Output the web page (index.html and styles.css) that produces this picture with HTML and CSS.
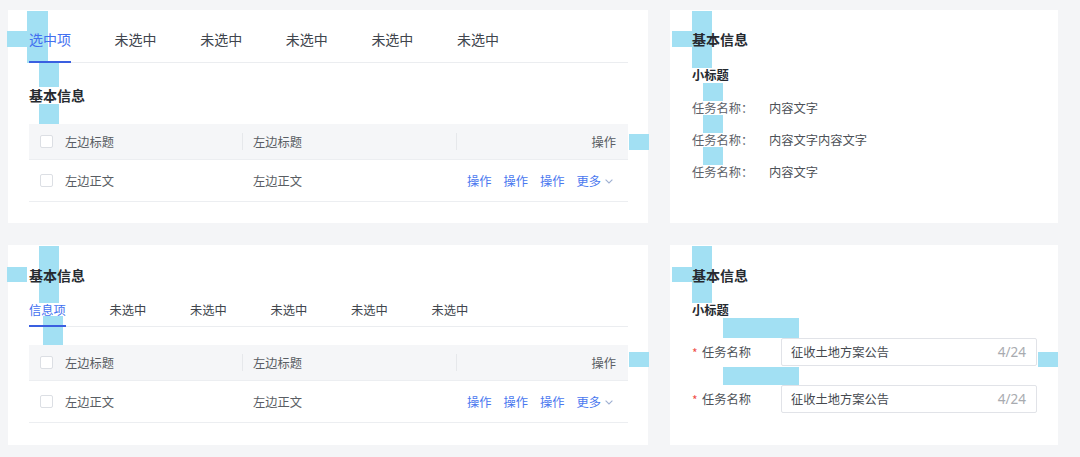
FILE: index.html
```html
<!DOCTYPE html>
<html lang="zh-CN">
<head>
<meta charset="utf-8">
<title>组件示例</title>
<link rel="stylesheet" href="styles.css">
</head>
<body>
<div class="page">

  <section class="card card-a">
    <span class="mark a-v1"></span>
    <span class="mark a-h1"></span>
    <span class="mark a-v2"></span>
    <span class="mark a-v3"></span>
    <span class="mark a-h2"></span>
    <nav class="tabs tabs-lg">
      <span class="tab active">选中项</span>
      <span class="tab">未选中</span>
      <span class="tab">未选中</span>
      <span class="tab">未选中</span>
      <span class="tab">未选中</span>
      <span class="tab">未选中</span>
    </nav>
    <h2 class="title title-after-tabs">基本信息</h2>
    <div class="table">
      <div class="tr thead">
        <div class="td c1"><span class="checkbox"></span>左边标题</div>
        <div class="td c2 divided">左边标题</div>
        <div class="td c3 divided">操作</div>
      </div>
      <div class="tr tbody">
        <div class="td c1"><span class="checkbox"></span>左边正文</div>
        <div class="td c2">左边正文</div>
        <div class="td c3 actions">
          <a class="link">操作</a><a class="link">操作</a><a class="link">操作</a>
          <a class="link more">更多<svg class="chev" width="8" height="5" viewBox="0 0 8 5"><path d="M0.6 0.6 L4 4 L7.4 0.6" fill="none" stroke="#9fb0d2" stroke-width="1.1"/></svg></a>
        </div>
      </div>
    </div>
  </section>

  <section class="card card-b">
    <span class="mark b-v1"></span>
    <span class="mark b-h1"></span>
    <span class="mark b-r1"></span>
    <span class="mark b-r2"></span>
    <span class="mark b-r3"></span>
    <h2 class="title">基本信息</h2>
    <h3 class="subtitle subtitle-b">小标题</h3>
    <dl class="desc">
      <div class="desc-row"><dt>任务名称：</dt><dd>内容文字</dd></div>
      <div class="desc-row"><dt>任务名称：</dt><dd>内容文字内容文字</dd></div>
      <div class="desc-row"><dt>任务名称：</dt><dd>内容文字</dd></div>
    </dl>
  </section>

  <section class="card card-c">
    <span class="mark c-v1"></span>
    <span class="mark c-h1"></span>
    <span class="mark c-v2"></span>
    <span class="mark c-h2"></span>
    <h2 class="title">基本信息</h2>
    <nav class="tabs tabs-sm">
      <span class="tab active">信息项</span>
      <span class="tab">未选中</span>
      <span class="tab">未选中</span>
      <span class="tab">未选中</span>
      <span class="tab">未选中</span>
      <span class="tab">未选中</span>
    </nav>
    <div class="table table-after-tabs">
      <div class="tr thead">
        <div class="td c1"><span class="checkbox"></span>左边标题</div>
        <div class="td c2 divided">左边标题</div>
        <div class="td c3 divided">操作</div>
      </div>
      <div class="tr tbody">
        <div class="td c1"><span class="checkbox"></span>左边正文</div>
        <div class="td c2">左边正文</div>
        <div class="td c3 actions">
          <a class="link">操作</a><a class="link">操作</a><a class="link">操作</a>
          <a class="link more">更多<svg class="chev" width="8" height="5" viewBox="0 0 8 5"><path d="M0.6 0.6 L4 4 L7.4 0.6" fill="none" stroke="#9fb0d2" stroke-width="1.1"/></svg></a>
        </div>
      </div>
    </div>
  </section>

  <section class="card card-d">
    <span class="mark d-v1"></span>
    <span class="mark d-h1"></span>
    <span class="mark d-g1"></span>
    <span class="mark d-g2"></span>
    <span class="mark d-r1"></span>
    <h2 class="title">基本信息</h2>
    <h3 class="subtitle subtitle-d">小标题</h3>
    <form class="form">
      <div class="form-row">
        <label class="form-label"><span class="req">*</span>任务名称</label>
        <div class="input"><span class="input-text">征收土地方案公告</span><span class="count">4/24</span></div>
      </div>
      <div class="form-row">
        <label class="form-label"><span class="req">*</span>任务名称</label>
        <div class="input"><span class="input-text">征收土地方案公告</span><span class="count">4/24</span></div>
      </div>
    </form>
  </section>

</div>
</body>
</html>
```

FILE: styles.css
```css
* { box-sizing: border-box; margin: 0; padding: 0; }

html, body {
  width: 1080px;
  height: 457px;
  overflow: hidden;
}

body {
  background: #f4f5f7;
  font-family: "Noto Sans CJK SC", "Noto Sans", "Liberation Sans", sans-serif;
  color: #333;
  font-size: 12.25px;
}

.page {
  display: grid;
  grid-template-columns: 640px 388px;
  grid-template-rows: 213px 200px;
  column-gap: 22px;
  row-gap: 22px;
  padding: 10px 0 0 8px;
}

.card {
  position: relative;
  background: #fff;
}

.card-a { padding: 21px 20px 0 21px; }
.card-b { padding: 21px 20px 0 22px; }
.card-c { padding: 22px 20px 0 21px; }
.card-d { padding: 22px 21px 0 22px; }

/* spacing annotation markers (overlay) */
.mark {
  position: absolute;
  background: #a2e0f3;
  z-index: 0;
}
.card > *:not(.mark) { position: relative; z-index: 1; }

.a-v1 { left: 19px; top: 1px; width: 21px; height: 52px; }
.a-h1 { left: -1px; top: 21px; width: 20px; height: 16px; }
.a-v2 { left: 31px; top: 53px; width: 20px; height: 24px; }
.a-v3 { left: 31px; top: 94px; width: 20px; height: 20px; }
.a-h2 { left: 621px; top: 124px; width: 20px; height: 16px; }

.b-v1 { left: 22px; top: 1px; width: 20px; height: 57px; }
.b-h1 { left: 2px; top: 21px; width: 20px; height: 16px; }
.b-r1 { left: 33px; top: 73px; width: 20px; height: 18px; }
.b-r2 { left: 33px; top: 105px; width: 20px; height: 18px; }
.b-r3 { left: 33px; top: 137px; width: 20px; height: 18px; }

.c-v1 { left: 31px; top: 1px; width: 20px; height: 57px; }
.c-h1 { left: -1px; top: 22px; width: 20px; height: 15px; }
.c-v2 { left: 35px; top: 71px; width: 20px; height: 29px; }
.c-h2 { left: 621px; top: 107px; width: 20px; height: 15px; }

.d-v1 { left: 22px; top: 1px; width: 20px; height: 57px; }
.d-h1 { left: 2px; top: 22px; width: 20px; height: 15px; }
.d-g1 { left: 53px; top: 73px; width: 76px; height: 20px; }
.d-g2 { left: 53px; top: 122px; width: 76px; height: 18px; }
.d-r1 { left: 368px; top: 107px; width: 20px; height: 15px; }

/* titles */
.title {
  font-size: 14px;
  line-height: 16px;
  font-weight: 700;
  color: #262a30;
}
.title-after-tabs {
  margin-top: 24px;
  line-height: 17px;
}
.card-c .title { margin-bottom: 20px; }
.card-d .title { margin-bottom: 20px; }

.subtitle {
  font-size: 12.25px;
  line-height: 15px;
  font-weight: 700;
  color: #262a30;
}
.subtitle-b { margin-top: 21px; }

/* tabs */
.tabs {
  display: flex;
  border-bottom: 1px solid #ebedf0;
}
.tab {
  display: block;
  color: #40454d;
  border-bottom: 2px solid transparent;
  margin-bottom: -1px;
  white-space: nowrap;
}
.tab.active {
  color: #4270f0;
  border-bottom-color: #3a5fe0;
}
.tabs-lg { gap: 43.6px; }
.tabs-lg .tab {
  font-size: 14px;
  line-height: 16px;
  padding-bottom: 14px;
}
.tabs-sm { gap: 43.75px; }
.tabs-sm .tab {
  font-size: 12.25px;
  line-height: 14px;
  padding-bottom: 8px;
}

/* table */
.table { margin-top: 20px; }
.table-after-tabs { margin-top: 18px; }

.tr {
  display: grid;
  grid-template-columns: 213px 214px 1fr;
  align-items: center;
}
.thead {
  height: 36px;
  background: #f5f6f8;
  border-bottom: 1px solid #eceef1;
}
.tbody {
  height: 42px;
  border-bottom: 1px solid #eceef1;
}
.td {
  display: flex;
  align-items: center;
  height: 100%;
  color: #595d63;
  line-height: 14px;
  white-space: nowrap;
}
.c1 { padding-left: 11px; gap: 12px; }
.c2 { padding-left: 11px; }
.thead .c3 { justify-content: flex-end; padding-right: 12px; }
.divided { position: relative; }
.divided::before {
  content: "";
  position: absolute;
  left: 0;
  top: 9px;
  bottom: 9px;
  width: 1px;
  background: #e6e8eb;
}

.checkbox {
  width: 13px;
  height: 13px;
  border: 1px solid #dcdfe4;
  border-radius: 2px;
  background: #fff;
  flex: none;
}

.actions {
  justify-content: flex-end;
  padding-right: 15px;
  gap: 12px;
}
.link {
  color: #4a78ef;
  text-decoration: none;
  display: flex;
  align-items: center;
}
.more { gap: 4px; }
.chev { display: block; margin-top: 1px; }

/* description list */
.desc { margin: 0; }
.desc-row {
  display: flex;
  margin-top: 18px;
  line-height: 14px;
}
.desc dt {
  width: 77px;
  color: #5d6168;
}
.desc dd {
  color: #4d5157;
}

/* form */
.form { margin-top: 20px; }
.form-row {
  display: flex;
  align-items: center;
  height: 28px;
}
.form-row + .form-row { margin-top: 19px; }
.form-label {
  width: 89px;
  display: flex;
  align-items: center;
  color: #4d5157;
  line-height: 14px;
}
.req {
  color: #f0504a;
  width: 10px;
  font-size: 12px;
  position: relative;
  top: 1px;
}
.input {
  width: 256px;
  height: 28px;
  border: 1px solid #e1e3e8;
  border-radius: 2px;
  display: flex;
  align-items: center;
  justify-content: space-between;
  padding: 0 10px 0 9px;
}
.input-text { color: #45494f; }
.count {
  color: #a8abb0;
  font-size: 13.5px;
  font-family: "Noto Sans", "Liberation Sans", sans-serif;
}
```
